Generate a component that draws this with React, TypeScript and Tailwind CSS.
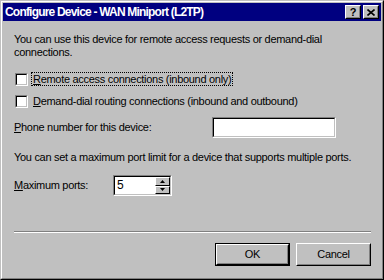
import React from "react";

const font = { fontFamily: '"Liberation Sans", Arial, sans-serif' };

function Sunken({ className = "", children }: { className?: string; children?: React.ReactNode }) {
  return (
    <div className={`border border-t-[#808080] border-l-[#808080] border-r-white border-b-white ${className}`}>
      <div className="w-full h-full border border-t-black border-l-black border-r-[#c0c0c0] border-b-[#c0c0c0] bg-white">
        {children}
      </div>
    </div>
  );
}

function Checkbox({ children, focused = false }: { children: React.ReactNode; focused?: boolean }) {
  return (
    <div className="flex items-center h-[14px] pl-[1px]">
      <Sunken className="w-[13px] h-[13px] shrink-0" />
      <span
        className={`ml-[3px] px-[1px] leading-[12px] whitespace-nowrap border ${focused ? "border-dotted border-black" : "border-transparent"}`}
      >
        {children}
      </span>
    </div>
  );
}

function Button({ label, isDefault = false }: { label: string; isDefault?: boolean }) {
  const face = (
    <div className="w-full h-full border border-t-white border-l-white border-r-black border-b-black">
      <div className="w-full h-full border border-t-[#c0c0c0] border-l-[#c0c0c0] border-r-[#808080] border-b-[#808080] flex items-center justify-center">
        {label}
      </div>
    </div>
  );
  return (
    <div className={`w-[75px] h-[23px] ${isDefault ? "border border-black" : ""}`}>{face}</div>
  );
}

function CaptionButton({ children }: { children: React.ReactNode }) {
  return (
    <div className="w-[16px] h-[14px] bg-[#c0c0c0] border border-t-white border-l-white border-r-black border-b-black">
      <div className="w-full h-full border border-t-[#c0c0c0] border-l-[#c0c0c0] border-r-[#808080] border-b-[#808080] flex items-center justify-center text-black">
        {children}
      </div>
    </div>
  );
}

function SpinArrow({ up }: { up: boolean }) {
  return (
    <div className="flex-1 bg-[#c0c0c0] border border-t-white border-l-white border-r-black border-b-black flex items-center justify-center">
      <svg width="5" height="3" viewBox="0 0 5 3">
        {up ? <path d="M2.5 0 L5 3 L0 3 Z" fill="black" /> : <path d="M0 0 L5 0 L2.5 3 Z" fill="black" />}
      </svg>
    </div>
  );
}

export default function App() {
  return (
    <div className="w-[384px] h-[280px] text-[11px] tracking-[-0.3px] text-black select-none" style={font}>
      <div className="w-full h-full bg-[#c0c0c0] border border-t-[#c0c0c0] border-l-[#c0c0c0] border-r-black border-b-black">
        <div className="w-full h-full border border-t-white border-l-white border-r-[#808080] border-b-[#808080] p-px flex flex-col">
          {/* Title bar */}
          <div className="h-[18px] bg-[#000080] flex items-center pl-[2px] pr-[2px]">
            <span className="text-white font-bold text-[12px] tracking-[-0.8px] whitespace-nowrap">
              Configure Device - WAN Miniport (L2TP)
            </span>
            <div className="ml-auto flex gap-[2px]">
              <CaptionButton>
                <span className="font-bold text-[11px] leading-none tracking-normal">?</span>
              </CaptionButton>
              <CaptionButton>
                <svg width="8" height="7" viewBox="0 0 8 7">
                  <path d="M0.5 0.5 L7.5 6.5 M7.5 0.5 L0.5 6.5" stroke="black" strokeWidth="1.6" />
                </svg>
              </CaptionButton>
            </div>
          </div>

          {/* Body */}
          <div className="flex flex-col pl-[11px] pr-[10px]">
            <p className="mt-[12px] leading-[13px] whitespace-nowrap">
              You can use this device for remote access requests or demand-dial
              <br />
              connections.
            </p>

            <div className="mt-[13px]">
              <Checkbox focused>
                <u>R</u>emote access connections (inbound only)
              </Checkbox>
            </div>
            <div className="mt-[8px]">
              <Checkbox>
                <u>D</u>emand-dial routing connections (inbound and outbound)
              </Checkbox>
            </div>

            <div className="mt-[9px] flex items-center">
              <span className="w-[198px]">
                <u>P</u>hone number for this device:
              </span>
              <Sunken className="w-[124px] h-[21px]" />
            </div>

            <p className="mt-[13px] leading-[13px] whitespace-nowrap">
              You can set a maximum port limit for a device that supports multiple ports.
            </p>

            <div className="mt-[11px] flex items-center">
              <span className="w-[99px]">
                <u>M</u>aximum ports:
              </span>
              <Sunken className="w-[59px] h-[21px]">
                <div className="flex h-full">
                  <span className="flex-1 pl-[2px] leading-[17px] text-[12px]">5</span>
                  <div className="w-[15px] flex flex-col">
                    <SpinArrow up />
                    <SpinArrow up={false} />
                  </div>
                </div>
              </Sunken>
            </div>

            <div className="mt-[35px] border-t border-t-[#808080] border-b border-b-white" />

            <div className="mt-[10px] flex justify-end gap-[6px]">
              <Button label="OK" isDefault />
              <Button label="Cancel" />
            </div>
          </div>
        </div>
      </div>
    </div>
  );
}
